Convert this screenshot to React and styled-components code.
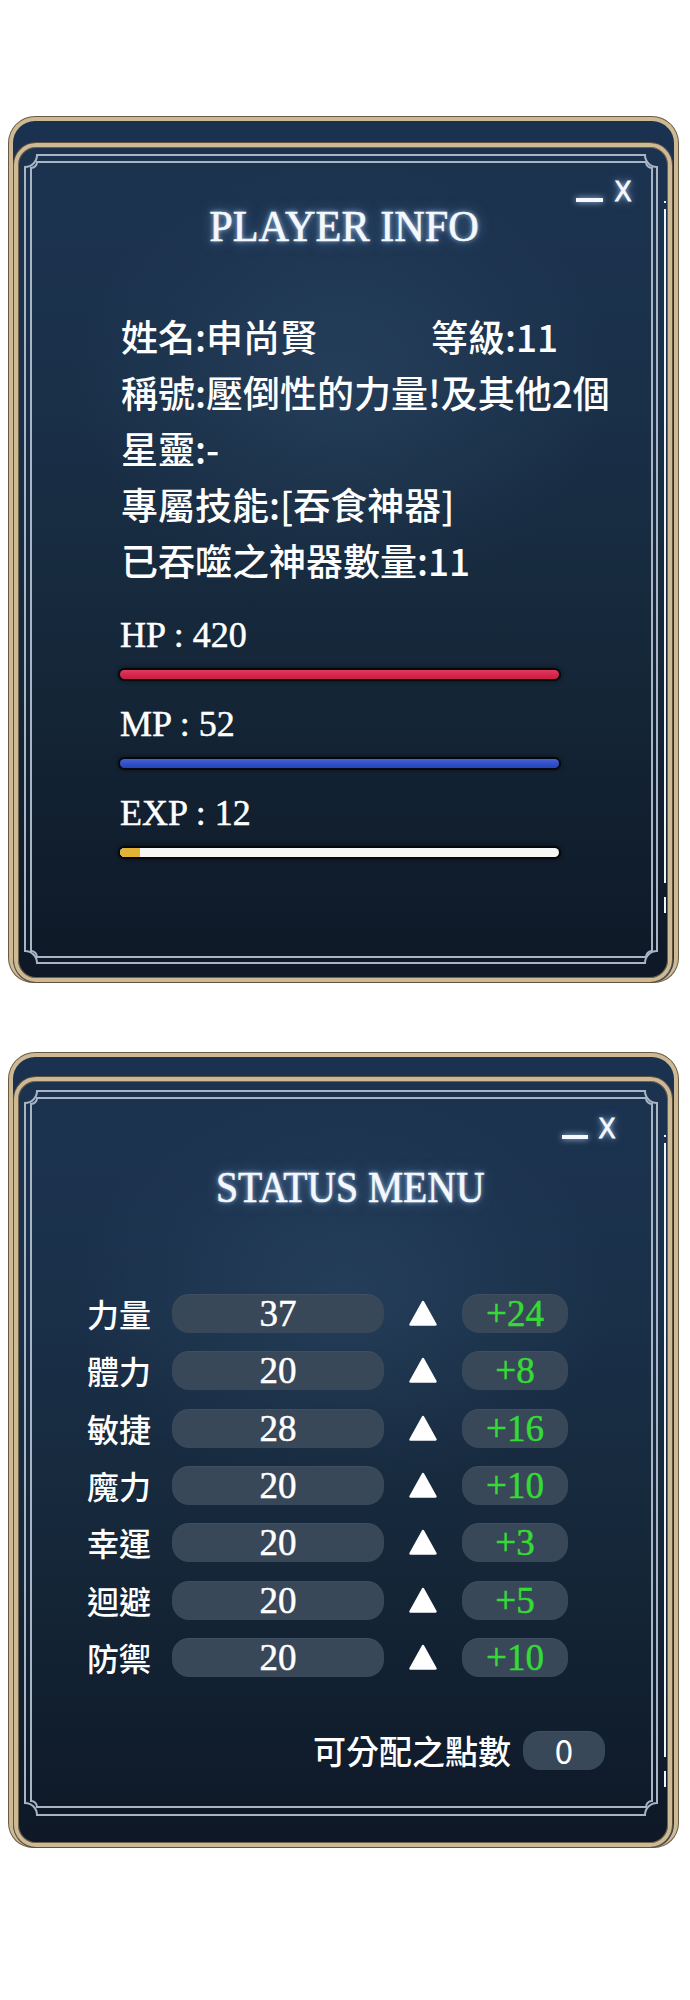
import React from 'react';
import styled, { createGlobalStyle } from 'styled-components';

const GlobalStyle = createGlobalStyle`
  html, body { margin: 0; padding: 0; background: #ffffff; }
  body { font-family: "Noto Sans CJK TC", "Noto Sans", sans-serif; }
`;

const Page = styled.div`
  width: 690px;
  box-sizing: border-box;
  padding: 117px 0 150px 9px;
  display: flex;
  flex-direction: column;
  gap: 71px;
`;

const BackFrame = styled.section`
  width: 669px;
  box-sizing: border-box;
  border: 4px solid #cdb993;
  border-bottom: 0;
  border-radius: 26px 26px 24px 24px;
  background: #1b3150;
  padding: ${(p) => p.$top}px 2px 0 1px;
  box-shadow: 0 0 0 1px #6a5a43;
`;

const FrontFrame = styled.div`
  position: relative;
  box-sizing: border-box;
  height: ${(p) => p.$h}px;
  border: 4px solid #cdb993;
  border-radius: 22px;
  box-shadow: 0 0 0 1px #5f5140, inset 0 0 0 1px #6f6049;
  background:
    radial-gradient(ellipse 55% 35% at 50% 28%, rgba(60, 92, 124, 0.3), rgba(60, 92, 124, 0) 75%),
    linear-gradient(180deg, #1c3350 0%, #1a3049 30%, #152739 62%, #0e1826 100%);
  padding-top: ${(p) => p.$top}px;
  display: flex;
  flex-direction: column;
`;

const DecoSvg = styled.svg`
  position: absolute;
  left: -4px;
  top: -4px;
  pointer-events: none;
`;

const Controls = styled.div`
  display: flex;
  justify-content: flex-end;
  align-items: flex-end;
  height: 30px;
  gap: ${(p) => p.$gap}px;
  padding-right: ${(p) => p.$right}px;
`;

const MinBar = styled.span`
  display: block;
  width: ${(p) => p.$w}px;
  height: 4px;
  margin-bottom: 4px;
  background: #f4f8ff;
  box-shadow: 0 0 6px rgba(190, 220, 255, 0.9);
`;

const CloseX = styled.span`
  display: block;
  font-family: "Liberation Sans", Arial, sans-serif;
  font-size: 30px;
  line-height: 30px;
  color: #f6f9ff;
  -webkit-text-stroke: 0.8px #f6f9ff;
  text-shadow: 0 0 6px rgba(190, 220, 255, 0.9), 0 0 12px rgba(150, 190, 240, 0.6);
  transform: scaleX(0.85);
`;

const Title = styled.h1`
  margin: ${(p) => p.$mt}px 0 0;
  padding-left: ${(p) => p.$shift}px;
  font-family: "Liberation Serif", "Times New Roman", serif;
  font-weight: 400;
  font-size: 44px;
  line-height: 44px;
  text-align: center;
  color: #f4f8fc;
  white-space: nowrap;
  -webkit-text-stroke: 0.6px #f4f8fc;
  transform: scaleX(${(p) => p.$sx});
  text-shadow: 0 0 5px rgba(180, 215, 255, 0.85), 0 0 14px rgba(120, 170, 230, 0.55);
`;

const InfoList = styled.div`
  margin-top: 59px;
  padding-left: 103px;
  display: flex;
  flex-direction: column;
`;

const InfoLine = styled.div`
  display: flex;
  font-size: 37px;
  line-height: 56px;
  font-weight: 500;
  color: #ffffff;
  white-space: nowrap;
`;

const InfoCell = styled.span`
  width: ${(p) => p.$w}px;
`;

const Meters = styled.div`
  margin-top: 29px;
  padding-left: 102px;
  display: flex;
  flex-direction: column;
  gap: 27px;
`;

const Meter = styled.div`
  display: flex;
  flex-direction: column;
`;

const MeterLabel = styled.div`
  font-family: "Liberation Serif", "Times New Roman", serif;
  font-size: 36px;
  line-height: 36px;
  color: #ffffff;
  -webkit-text-stroke: 0.5px #ffffff;
  white-space: nowrap;
`;

const Track = styled.div`
  margin-top: 17px;
  width: 439px;
  height: 9px;
  border-radius: 5px;
  background: ${(p) => p.$bg};
  box-shadow: 0 0 0 2px #05070b, 0 0 5px 2px rgba(0, 0, 0, 0.55);
  overflow: hidden;
  display: flex;
`;

const TrackFill = styled.div`
  height: 100%;
  background: #e2b234;
`;

const StatGrid = styled.div`
  margin-top: 84px;
  padding-left: 69px;
  display: grid;
  grid-template-columns: 85px 212px 78px 106px;
  grid-auto-rows: 39px;
  row-gap: 18.33px;
  align-items: center;
`;

const StatLabel = styled.div`
  font-size: 32px;
  line-height: 39px;
  font-weight: 500;
  color: #ffffff;
  white-space: nowrap;
`;

const Pill = styled.div`
  height: 39px;
  border-radius: 17px;
  background: #394859;
  box-shadow: inset 0 1px 0 rgba(255, 255, 255, 0.04);
  display: flex;
  align-items: center;
  justify-content: center;
  font-family: ${(p) => (p.$sans ? '"Noto Sans CJK TC", "Noto Sans", sans-serif' : '"Liberation Serif", "Times New Roman", serif')};
  font-size: ${(p) => (p.$sans ? 33 : 37)}px;
  line-height: 39px;
  color: ${(p) => (p.$green ? '#36da36' : '#ffffff')};
  -webkit-text-stroke: ${(p) => (p.$sans ? 0 : 0.5)}px ${(p) => (p.$green ? '#36da36' : '#ffffff')};
  width: ${(p) => (p.$w ? `${p.$w}px` : 'auto')};
`;

const ArrowCell = styled.div`
  display: flex;
  justify-content: center;
  align-items: center;
`;

const PointsRow = styled.div`
  margin-top: 54px;
  padding-right: 63px;
  display: flex;
  justify-content: flex-end;
  align-items: center;
  gap: 12px;
`;

const PointsLabel = styled.span`
  font-size: 33px;
  line-height: 39px;
  font-weight: 500;
  color: #ffffff;
  white-space: nowrap;
`;

function notchRect(x0, y0, x1, y1, r) {
  return `M${x0 + r} ${y0} H${x1 - r} A${r} ${r} 0 0 0 ${x1} ${y0 + r} V${y1 - r} A${r} ${r} 0 0 0 ${x1 - r} ${y1} H${x0 + r} A${r} ${r} 0 0 0 ${x0} ${y1 - r} V${y0 + r} A${r} ${r} 0 0 0 ${x0 + r} ${y0} Z`;
}

function Deco({ w, h, outer, inner, glitch }) {
  const [ol, ot, or, ob] = outer;
  const [il, it, ir, ib] = inner;
  return (
    <DecoSvg width={w} height={h} viewBox={`0 0 ${w} ${h}`}>
      <g fill="none" stroke="#a9b5c5" strokeWidth="2">
        <path d={notchRect(ol, ot, w - or, h - ob, 12)} />
        <path d={notchRect(il, it, w - ir, h - ib, 6)} />
      </g>
      <g stroke="#f2f4f7" strokeWidth="2">
        <line x1={w - 7} y1={glitch[0]} x2={w - 7} y2={glitch[0] + 2} />
        <line x1={w - 7} y1={glitch[0] + 8} x2={w - 7} y2={glitch[1]} />
        <line x1={w - 7} y1={glitch[1] + 14} x2={w - 7} y2={glitch[1] + 30} />
      </g>
    </DecoSvg>
  );
}

function UpArrow() {
  return (
    <svg width="28" height="27" viewBox="0 0 28 27">
      <path
        d="M14 2 L26.5 24.5 L1.5 24.5 Z"
        fill="#ffffff"
        stroke="#ffffff"
        strokeWidth="2.5"
        strokeLinejoin="round"
      />
    </svg>
  );
}

const stats = [
  ['力量', '37', '+24'],
  ['體力', '20', '+8'],
  ['敏捷', '28', '+16'],
  ['魔力', '20', '+10'],
  ['幸運', '20', '+3'],
  ['迴避', '20', '+5'],
  ['防禦', '20', '+10'],
];

export default function App() {
  return (
    <>
      <GlobalStyle />
      <Page>
        <BackFrame $top={22}>
          <FrontFrame $h={839} $top={29}>
            <Deco w={658} h={839} outer={[11, 12, 15, 19]} inner={[17, 19, 20, 25]} glitch={[58, 740]} />
            <Controls $gap={10} $right={35}>
              <MinBar $w={27} />
              <CloseX>X</CloseX>
            </Controls>
            <Title $mt={-1} $shift={2} $sx={0.96}>PLAYER INFO</Title>
            <InfoList>
              <InfoLine>
                <InfoCell $w={310}>姓名:申尚賢</InfoCell>
                <span>等級:11</span>
              </InfoLine>
              <InfoLine>稱號:壓倒性的力量!及其他2個</InfoLine>
              <InfoLine>星靈:-</InfoLine>
              <InfoLine>專屬技能:[吞食神器]</InfoLine>
              <InfoLine>已吞噬之神器數量:11</InfoLine>
            </InfoList>
            <Meters>
              <Meter>
                <MeterLabel>HP : 420</MeterLabel>
                <Track $bg="linear-gradient(180deg, #e33a60 0%, #d6264e 55%, #c81f45 100%)" />
              </Meter>
              <Meter>
                <MeterLabel>MP : 52</MeterLabel>
                <Track $bg="linear-gradient(180deg, #4262da 0%, #3150c8 55%, #2843b6 100%)" />
              </Meter>
              <Meter>
                <MeterLabel>EXP : 12</MeterLabel>
                <Track $bg="#f6f6f4">
                  <TrackFill style={{ width: 20 }} />
                </Track>
              </Meter>
            </Meters>
          </FrontFrame>
        </BackFrame>

        <BackFrame $top={20}>
          <FrontFrame $h={770} $top={32}>
            <Deco w={658} h={770} outer={[11, 14, 15, 32]} inner={[17, 21, 20, 40]} glitch={[58, 680]} />
            <Controls $gap={9} $right={51}>
              <MinBar $w={26} />
              <CloseX>X</CloseX>
            </Controls>
            <Title $mt={23} $shift={16} $sx={0.9}>STATUS MENU</Title>
            <StatGrid>
              {stats.map(([name, val, bonus]) => (
                <React.Fragment key={name}>
                  <StatLabel>{name}</StatLabel>
                  <Pill>{val}</Pill>
                  <ArrowCell>
                    <UpArrow />
                  </ArrowCell>
                  <Pill $green>{bonus}</Pill>
                </React.Fragment>
              ))}
            </StatGrid>
            <PointsRow>
              <PointsLabel>可分配之點數</PointsLabel>
              <Pill $sans $w={82}>0</Pill>
            </PointsRow>
          </FrontFrame>
        </BackFrame>
      </Page>
    </>
  );
}
